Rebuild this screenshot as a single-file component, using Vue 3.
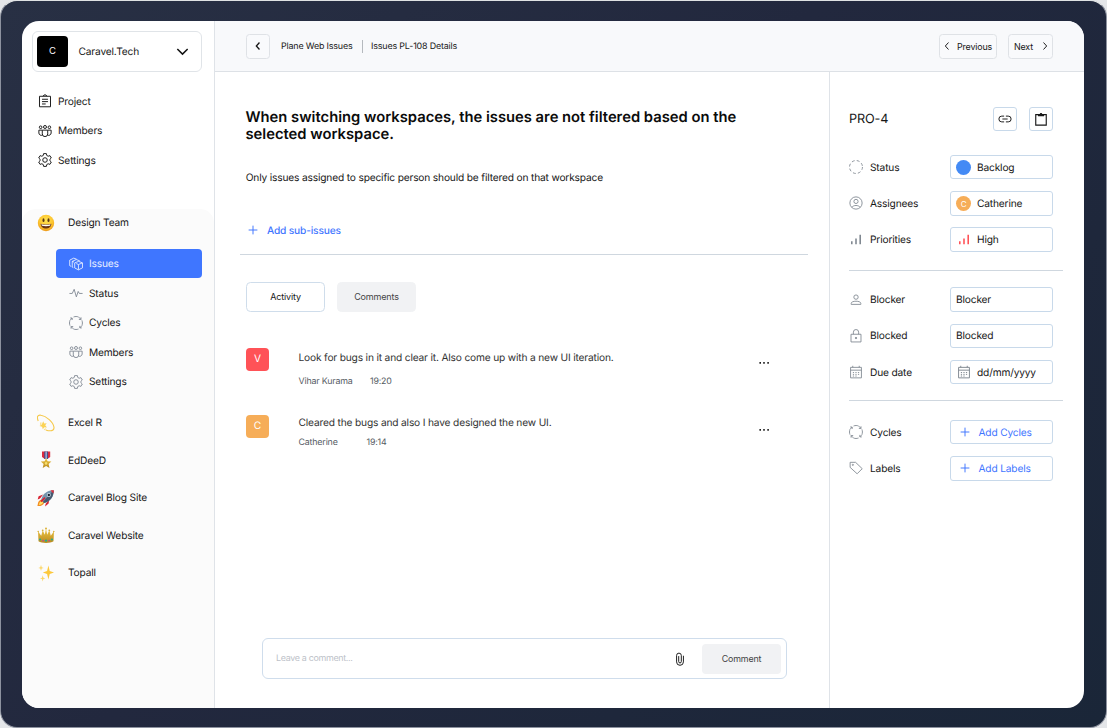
<script setup>
const mainNav = [
  { icon: 'project', label: 'Project' },
  { icon: 'members', label: 'Members' },
  { icon: 'settings', label: 'Settings' },
]
const teamNav = [
  { icon: 'issues', label: 'Issues', active: true },
  { icon: 'pulse', label: 'Status' },
  { icon: 'cycles', label: 'Cycles' },
  { icon: 'members', label: 'Members' },
  { icon: 'settings', label: 'Settings' },
]
const projects = [
  { icon: 'dizzy', label: 'Excel R' },
  { icon: 'medal', label: 'EdDeeD' },
  { icon: 'rocket', label: 'Caravel Blog Site' },
  { icon: 'crown', label: 'Caravel Website' },
  { icon: 'sparkles', label: 'Topall' },
]
const activity = [
  { initial: 'V', tone: 'red', text: 'Look for bugs in it and clear it. Also come up with a new UI iteration.', author: 'Vihar Kurama', time: '19:20' },
  { initial: 'C', tone: 'amber', text: 'Cleared the bugs and also I have designed the new UI.', author: 'Catherine', time: '19:14' },
]
const groups = [
  [
    { icon: 'dashed', label: 'Status', value: 'Backlog', lead: 'dot' },
    { icon: 'user', label: 'Assignees', value: 'Catherine', lead: 'person' },
    { icon: 'bars', label: 'Priorities', value: 'High', lead: 'bars' },
  ],
  [
    { icon: 'person', label: 'Blocker', value: 'Blocker' },
    { icon: 'lock', label: 'Blocked', value: 'Blocked' },
    { icon: 'calendar', label: 'Due date', value: 'dd/mm/yyyy', lead: 'calendar' },
  ],
  [
    { icon: 'cycles', label: 'Cycles', value: 'Add Cycles', lead: 'plus' },
    { icon: 'tag', label: 'Labels', value: 'Add Labels', lead: 'plus' },
  ],
]
</script>

<template>
  <svg class="defs" aria-hidden="true">
    <symbol id="project" viewBox="0 0 16 16">
      <path d="M1.700 2.600h12.600v12H1.700zM5.800 2.600L6.900 1.100h2.200l1.100 1.500M4.600 6h6.800M4.600 8.700h6.800M4.600 11.400h4.200" />
    </symbol>
    <symbol id="members" viewBox="0 0 16 16">
      <circle cx="3" cy="3.700" r="1.500" /><circle cx="8" cy="3.400" r="1.700" /><circle cx="13" cy="3.700" r="1.500" />
      <path d="M4.900 7h6.200v4.300a3.100 3.100 0 0 1-6.200 0zM4.600 7H1v3.300a2.800 2.800 0 0 0 4 2.400M11.400 7H15v3.300a2.800 2.800 0 0 1-4 2.400" />
    </symbol>
    <symbol id="settings" viewBox="0 0 16 16">
      <circle cx="8" cy="8" r="2.600" />
      <path d="M6.400.700h3.200l.4 2.100 1.600.9 2-.7 1.600 2.700-1.600 1.500v1.600l1.600 1.500-1.600 2.700-2-.7-1.600.9-.4 2.100H6.400L6 13.200l-1.600-.9-2 .7-1.600-2.700 1.600-1.500V7.200L.8 5.700 2.400 3l2 .7L6 2.800z" />
    </symbol>
    <symbol id="issues" viewBox="0 0 16 16">
      <path d="M6.500 6.700l4.600-1.700 4.300 1.700v5.700l-4.600 2.300-4.300-2.200zM8.300 7.500l2.500 1.100 4.400-1.800M10.800 8.600v5.900" />
      <path d="M4.900 12.200l-1.200-.6V5l4.600-2.100 4 1.500M3.700 5l2 .8M2.500 10.700l-1.700-.8V3.600L5.400 1.300l3.300 1.200" />
    </symbol>
    <symbol id="pulse" viewBox="0 0 16 16"><path d="M.5 8.500h3.200L5.900 3.800l2.500 8.600 2.100-6.200 1.300 2.300h3.700" /></symbol>
    <symbol id="cycles" viewBox="0 0 16 16">
      <path d="M5.200 1.100c1.900-.7 4-.7 5.700 0M14.800 5c.7 2 .7 4 0 5.900M10.900 14.900c-1.900.7-3.900.7-5.800 0M1.100 11C.4 9 .4 7 1.100 5" />
      <path d="M1.400 2.300h2.200v2.300M3.600 2.300L1.200 4.900M13.700 1.500v2.400h-2.400M11.200 1.300l2.500 2.600M14.600 13.600h-2.200v-2.300M12.400 13.600l2.400-2.600M2.400 14.500v-2.400h2.400M4.900 14.700l-2.500-2.600" />
    </symbol>
    <symbol id="dashed" viewBox="0 0 16 16"><circle cx="8" cy="8" r="7.400" stroke-dasharray="3.300 2.510" /></symbol>
    <symbol id="user" viewBox="0 0 16 16">
      <circle cx="8" cy="8" r="7" /><circle cx="8" cy="6.200" r="2.400" /><path d="M3.200 13c1.900-2.900 7.700-2.900 9.600 0" />
    </symbol>
    <symbol id="bars" viewBox="0 0 16 16"><path stroke-width="1.800" d="M3.200 14v-3.500M8 14V7.500M12.800 14V3" /></symbol>
    <symbol id="person" viewBox="0 0 16 16">
      <circle cx="8" cy="4.700" r="2.500" /><path d="M2.500 13v-1.200c0-3.200 11-3.200 11 0V13z" />
    </symbol>
    <symbol id="lock" viewBox="0 0 16 16">
      <path d="M2.300 6h11.400v8.800H2.300zM5 6V3.600a3 3 0 0 1 6 0V6" /><circle cx="8" cy="10.300" r=".8" fill="currentColor" />
    </symbol>
    <symbol id="calendar" viewBox="0 0 16 16">
      <path d="M1.800 2.700h12.400v12H1.800zM1.800 5.900h12.400M4.300.900v1.800M11.700.900v1.800" />
      <path stroke-dasharray="1.400 1.500" d="M4.400 8.600h7.800M4.400 10.700h7.800M4.400 12.600h4.800" />
    </symbol>
    <symbol id="tag" viewBox="0 0 16 16">
      <path d="M1.300 1.500h6.200l7.600 7.300-5.800 5.800-8-7.300z" /><circle cx="4.400" cy="4.400" r=".7" />
    </symbol>
    <symbol id="plus" viewBox="0 0 16 16"><path d="M8 3v10M3 8h10" /></symbol>
    <symbol id="left" viewBox="0 0 16 16"><path d="M9.700 4L6.100 8l3.600 4" /></symbol>
    <symbol id="right" viewBox="0 0 16 16"><path d="M6.300 4l3.600 4-3.600 4" /></symbol>
    <symbol id="down" viewBox="0 0 16 16"><path d="M2.500 5.300L8 10.800l5.500-5.500" /></symbol>
    <symbol id="link" viewBox="0 0 16 16">
      <path d="M7 4.700H4.300a3.300 3.300 0 0 0 0 6.600H7M9 4.700h2.700a3.300 3.300 0 0 1 0 6.600H9M5 8h6" />
    </symbol>
    <symbol id="clipboard" viewBox="0 0 16 16">
      <path stroke-width="1.300" d="M2 3h12v12H2z" /><path fill="currentColor" stroke="none" d="M4.500 2.500h2C6.700.500 9.300.500 9.500 2.500h2v2.300h-7z" />
    </symbol>
    <symbol id="clip" viewBox="0 0 16 16">
      <path d="M11.900 4.300v7a3.900 3.900 0 0 1-7.800 0V4a2.700 2.700 0 0 1 5.400 0v7a1.500 1.500 0 0 1-3 0V4.700" />
    </symbol>
    <symbol id="more" viewBox="0 0 12 4"><path stroke="none" fill="#222" d="M1.400 1.100h1.600v1.600H1.400zM5.200 1.100h1.600v1.600H5.200zM9.300 1.100h1.600v1.600H9.300z" /></symbol>

    <radialGradient id="face" cx=".5" cy=".35" r=".65"><stop offset="0" stop-color="#ffe552" /><stop offset=".65" stop-color="#fdc42e" /><stop offset="1" stop-color="#ec9a1c" /></radialGradient>
    <linearGradient id="gold" x1="0" y1="0" x2="0" y2="1"><stop offset="0" stop-color="#f0c844" /><stop offset="1" stop-color="#b98a1f" /></linearGradient>
    <symbol id="smile" viewBox="0 0 18 18">
      <circle cx="9" cy="9" r="8.200" fill="url(#face)" />
      <ellipse cx="6.500" cy="6.200" rx="1" ry="1.900" fill="#5b3715" /><ellipse cx="11.500" cy="6.200" rx="1" ry="1.900" fill="#5b3715" />
      <path d="M3.600 9.700c3 1 7.800 1 10.800 0-.2 6.400-10.600 6.400-10.800 0z" fill="#6b3411" /><path d="M4.400 10.200c3 .8 6.200.8 9.200 0l-.5 1.600c-2.500.6-5.700.6-8.200 0z" fill="#fff" />
    </symbol>
    <symbol id="dizzy" viewBox="0 0 18 18">
      <path d="M1.200 7C-.4 3 .6.500 4 1.200c5 .8 12.600 6.800 13 12.200.2 3.600-3.700 4.200-8.200 2.500" fill="none" stroke="#f6c94b" stroke-width="1.100" />
      <path d="M6.200 7.300l1 2.300 2.500-.4-1.500 2.100 1.800 2.100-2.700-.2-1.500 2.100-.7-2.500-2.600-.8 2.300-1.400z" fill="#fbd355" />
      <path d="M4 8.300l-.4 2.500M9 14.800l-2 1" fill="none" stroke="#fae08a" stroke-width="1.200" />
    </symbol>
    <symbol id="medal" viewBox="0 0 18 18">
      <path d="M5 .5h8.200v5.600L10.400 8H7.800L5 6.100z" fill="#dd2c3f" /><path d="M7.300.5h3.600V8H7.300z" fill="#3c4f93" /><path d="M8.600.5h1V8h-1z" fill="#d7dff0" />
      <path d="M9.100 7l1.500 3.200 3.800.3-2.800 2.500.9 4-3.400-2-3.400 2 .9-4-2.800-2.500 3.800-.3z" fill="url(#gold)" /><circle cx="9.100" cy="12.400" r="1.300" fill="#f6df6c" />
    </symbol>
    <symbol id="rocket" viewBox="0 0 18 18">
      <path d="M3 9.400L.7 10.600l.9-3.300 4.600-1.800zM8.600 15l-.5 2.500 3.500-3 .7-4.600z" fill="#d92332" />
      <path d="M4.600 10.600C.4 11.900 1.300 14.700.4 17c3.200.2 5.700-.3 7-3.500z" fill="#f28c21" /><path d="M4.700 12c-2.300.6-2.200 2.200-2.900 3.900 2.100-.2 3.500-.7 4.400-2.700z" fill="#ffe067" />
      <path d="M4.200 10.800C5 5.600 10 .9 16.700 1.200c.1 6.400-3.500 11.300-9.400 12.800z" fill="#7594ad" /><path d="M5.900 12.900L15.800 2l.9-.8c.1 6.400-3.500 11.300-9.400 12.800z" fill="#465a70" />
      <path d="M13.500 1.500c1-.3 2-.4 3.200-.3.100 1.200 0 2.200-.3 3.200z" fill="#e2303d" /><circle cx="11.800" cy="6" r="1.900" fill="#dce7f0" /><circle cx="11.800" cy="6" r="1.200" fill="#172333" />
      <path d="M4 12.600l4-4" stroke="#d92332" stroke-width="1.800" />
    </symbol>
    <symbol id="crown" viewBox="0 0 18 18">
      <path d="M1 5.300l3.200 4.500L5.700 4.200l2.100 4.600L9 2.500l1.200 6.300 2.100-4.600 1.500 5.600L17 5.300l-.5 10c-3.400 2.100-11.600 2.100-15 0z" fill="url(#gold)" />
      <g fill="#dcb23a"><circle cx="1.200" cy="5.500" r=".8" /><circle cx="5.700" cy="4.300" r=".9" /><circle cx="9" cy="2.500" r="1" /><circle cx="12.300" cy="4.300" r=".9" /><circle cx="16.800" cy="5.500" r=".8" /></g>
      <circle cx="3.100" cy="13.500" r="1.100" fill="#28aa8a" /><circle cx="6" cy="14.600" r=".9" fill="#b84c97" /><circle cx="9" cy="14.600" r="1.200" fill="#28aa8a" /><circle cx="12" cy="14.600" r=".9" fill="#b84c97" /><circle cx="14.900" cy="13.500" r="1.100" fill="#28aa8a" />
    </symbol>
    <symbol id="sparkles" viewBox="0 0 18 18">
      <path d="M11.400 1.500l1.300 5.500 4.300 1.500-4.300 1.500-1.300 5.500-1.300-5.500-4.300-1.500L10.100 7z" fill="#fcc83b" />
      <path d="M4 .7l.7 2.500 2 .7-2 .7L4 7.100l-.7-2.500-2-.7 2-.7zM5.700 11.300l.7 2.400 2 .7-2 .7-.7 2.300-.7-2.300-2-.7 2-.7z" fill="#fbd666" />
    </symbol>
  </svg>

  <div class="backdrop">
    <div class="window">
      <aside class="sidebar">
        <div class="workspace">
          <span class="ws-logo">C</span>
          <span class="ws-name">Caravel.Tech</span>
          <svg class="chev"><use href="#down" /></svg>
        </div>
        <nav class="nav">
          <a v-for="n in mainNav" :key="n.label" class="nav-row"><svg class="icon"><use :href="'#' + n.icon" /></svg><span class="label">{{ n.label }}</span></a>
        </nav>
        <div class="teams">
          <div class="team"><svg class="emoji"><use href="#smile" /></svg><span class="label">Design Team</span></div>
          <nav class="team-nav">
            <a v-for="n in teamNav" :key="n.label" class="nav-row" :class="{ active: n.active }"><svg class="icon"><use :href="'#' + n.icon" /></svg><span class="label">{{ n.label }}</span></a>
          </nav>
          <div v-for="p in projects" :key="p.label" class="team project"><svg class="emoji"><use :href="'#' + p.icon" /></svg><span class="label">{{ p.label }}</span></div>
        </div>
      </aside>

      <div class="content">
        <header class="topbar">
          <button class="btn back"><svg class="icon"><use href="#left" /></svg></button>
          <span class="label first">Plane Web Issues</span>
          <span class="divider"></span>
          <span class="label">Issues PL-108 Details</span>
          <button class="btn prev"><svg class="icon"><use href="#left" /></svg><span class="label">Previous</span></button>
          <button class="btn next"><span class="label">Next</span><svg class="icon"><use href="#right" /></svg></button>
        </header>
        <div class="columns">
          <main class="issue">
            <h1>When switching workspaces, the issues are not filtered based on the selected workspace.</h1>
            <p class="desc">Only issues assigned to specific person should be filtered on that workspace</p>
            <div class="sub"><svg class="icon"><use href="#plus" /></svg><span class="label">Add sub-issues</span></div>
            <div class="tabs"><button class="tab on">Activity</button><button class="tab">Comments</button></div>
            <div class="feed">
              <article v-for="a in activity" :key="a.author" class="entry" :class="a.tone">
                <span class="avatar">{{ a.initial }}</span>
                <div class="body">
                  <div class="text">{{ a.text }}</div>
                  <div class="meta"><span class="author">{{ a.author }}</span><span>{{ a.time }}</span></div>
                </div>
                <svg class="more"><use href="#more" /></svg>
              </article>
            </div>
            <div class="composer">
              <span class="placeholder">Leave a comment...</span>
              <svg class="icon"><use href="#clip" /></svg>
              <button class="send">Comment</button>
            </div>
          </main>
          <aside class="details">
            <div class="d-head">
              <span class="key">PRO-4</span>
              <button class="square"><svg class="icon"><use href="#link" /></svg></button>
              <button class="square"><svg class="icon"><use href="#clipboard" /></svg></button>
            </div>
            <section v-for="(g, i) in groups" :key="i" class="group">
              <div v-for="f in g" :key="f.label" class="field">
                <svg class="icon"><use :href="'#' + f.icon" /></svg>
                <span class="f-label label">{{ f.label }}</span>
                <div class="f-value" :class="f.lead && 'with-' + f.lead">
                  <span v-if="f.lead === 'dot'" class="round blue"></span>
                  <span v-else-if="f.lead === 'person'" class="round orange">C</span>
                  <svg v-else-if="f.lead" class="icon lead"><use :href="'#' + f.lead" /></svg>
                  <span class="label">{{ f.value }}</span>
                </div>
              </div>
            </section>
          </aside>
        </div>
      </div>
    </div>
  </div>
</template>

<style>
body { background: #e4e6e9; }
</style>

<style scoped>
* { box-sizing: border-box; }
.defs { position: absolute; width: 0; height: 0; }
.backdrop {
  height: 728px; padding: 20px 22px 19px 21px; border: 1px solid #8d929f; border-radius: 17px;
  border-top-color: #dfe2e3;
  background: linear-gradient(135deg, #283044 0%, #22283e 45%, #1a2638 100%);
  font-family: Inter, "Liberation Sans", sans-serif; font-size: 10.200px; line-height: 16px; color: #171717;
  letter-spacing: -.170px; text-rendering: geometricPrecision;
}
.window { display: flex; height: 687px; border-radius: 17px; background: #fff; overflow: hidden; }
.icon { width: 14px; height: 14px; flex: none; fill: none; stroke: currentColor; stroke-width: 1.100; }
button { font: inherit; color: inherit; letter-spacing: inherit; padding: 0; }
.label { padding-top: 1px; }

.sidebar { width: 193px; flex: none; border-right: 1px solid #dfe3e8; display: flex; flex-direction: column; }
.workspace { margin: 10px 12px 0 10px; height: 41px; border: 1px solid #e0e4e8; border-radius: 6px; display: flex; align-items: center; padding: 0 11px 0 4px; }
.ws-logo { width: 31px; height: 31px; border-radius: 4px; background: #000; color: #fff; display: grid; place-items: center; font-size: 9.500px; }
.ws-name { margin-left: 10.500px; flex: 1; }
.chev { width: 15px; height: 15px; fill: none; stroke: #111; stroke-width: 1.600; }
.nav { margin-top: 14.700px; }
.nav-row { display: flex; align-items: center; height: 29.500px; }
.nav .nav-row { padding-left: 15.500px; gap: 6.500px; }
.teams { flex: 1; margin-top: 34.300px; background: #fbfbfb; border-radius: 14px 14px 0 0; }
.team { display: flex; align-items: center; height: 26px; padding: 1px 0 0 15px; gap: 13px; }
.emoji { width: 18px; height: 18px; }
.team-nav { margin: 13.500px 12px 6.500px 34px; }
.team-nav .nav-row { padding: 0 0 0 12.500px; gap: 6.500px; border-radius: 4px; }
.team-nav .icon { color: #7d8590; stroke-width: 1; }
.team-nav .active { background: #3f76ff; color: #e8efff; }
.team-nav .active .icon { color: #e8efff; }
.project { height: 37.500px; padding-top: 2px; }

.content { flex: 1; min-width: 0; display: flex; flex-direction: column; }
.topbar { height: 51px; flex: none; background: #f8f9fb; border-bottom: 1px solid #dde1e6; display: flex; align-items: center; padding: 0 31px; font-size: 8.920px; }
.btn { height: 25px; border: 1px solid #dfe2e6; border-radius: 3.500px; background: #f9fafc; display: flex; align-items: center; }
.back { width: 24px; justify-content: center; }
.back .icon { stroke-width: 1.500; }
.first { margin-left: 11px; }
.divider { width: 1px; height: 13px; margin: 0 8.500px 0 9px; background: #b5b9be; }
.prev { margin-left: auto; width: 58px; gap: 3px; }
.next { margin-left: 11px; width: 45px; justify-content: space-between; padding-left: 5px; }

.columns { flex: 1; display: flex; min-height: 0; }
.issue { width: 614px; flex: none; padding: 36.500px 21px 29px 31px; display: flex; flex-direction: column; }
h1 { margin: 0 0 0 -.500px; font-size: 14.770px; line-height: 17px; font-weight: 600; color: #0b0b0b; width: 510px; letter-spacing: 0; }
.desc { margin: 27.500px 0 0 -.300px; }
.sub { height: 69px; margin: -.500px 0 0 -6px; padding: 21px 0 0 6px; display: flex; align-items: center; gap: 7px; color: #3f76ff; border-bottom: 1px solid #cfd7df; font-weight: 500; }
.tabs { display: flex; gap: 12px; margin-top: 27px; font-size: 9px; }
.tab { width: 79px; height: 30px; border: 1px solid #f1f2f4; border-radius: 4.500px; background: #f1f2f4; color: #444; }
.tab.on { background: #fff; border-color: #cfddeb; color: #171717; }
.feed { margin-top: 36px; }
.entry { display: flex; height: 67px; }
.avatar { width: 23px; height: 23px; border-radius: 4px; color: #fff; display: grid; place-items: center; }
.red .avatar { background: #ff5257; }
.amber .avatar { background: #f6ad58; }
.body { margin-left: 29.500px; flex: 1; color: #333; }
.text { margin-top: 2px; }
.meta { display: flex; margin-top: 8px; font-size: 8.850px; color: #555b63; }
.author { width: 71.500px; }
.amber .text { margin-top: 0; }
.amber .meta { margin-top: 4.500px; }
.amber .author { width: 68px; }
.more { width: 12px; height: 4px; margin: 13px 38px 0 0; }
.composer { margin: auto 0 0 16px; width: 525px; height: 41px; border: 1px solid #cfddec; border-radius: 6px; display: flex; align-items: center; padding: 0 5px 0 13px; font-size: 8.900px; }
.placeholder { flex: 1; color: #bcc1c8; letter-spacing: -.300px; padding-top: 1px; }
.composer .icon { margin-right: 15.500px; }
.send { width: 79px; height: 30px; border: 0; border-radius: 4px; background: #f1f2f4; color: #444; }

.details { flex: 1; border-left: 1px solid #dfe3e8; padding: 34.500px 21px 0 19px; }
.d-head { display: flex; align-items: center; height: 25px; padding-right: 10px; margin-bottom: 17.500px; }
.key { flex: 1; font-size: 12.700px; padding-top: 2px; }
.square { width: 24px; height: 24px; border: 1px solid #c8d9ea; border-radius: 3px; background: #fff; display: grid; place-items: center; margin-left: 12px; }
.group { padding-bottom: 12px; margin-bottom: 11px; border-bottom: 1px solid #cfd7df; }
.group:nth-of-type(2) { padding-bottom: 10px; margin-bottom: 13px; }
.group:last-child { border: 0; }
.field { display: flex; align-items: center; height: 36.200px; padding-right: 10px; }
.field > .icon { color: #808891; stroke-width: 1; }
.f-label { margin-left: 7px; flex: 1; }
.f-value { width: 103.500px; height: 24.500px; border: 1px solid #c8d9ea; border-radius: 3px; display: flex; align-items: center; padding-left: 5.500px; gap: 6px; }
.round { width: 15px; height: 15px; border-radius: 50%; display: grid; place-items: center; font-size: 8px; color: #fff; }
.blue { background: #438af5; }
.orange { background: #f6ad58; }
.with-bars .lead { color: #ff5257; }
.with-calendar .lead { color: #808891; }
.lead { margin: 0 .500px; }
.with-plus { color: #3f76ff; padding-left: 7px; }
</style>
